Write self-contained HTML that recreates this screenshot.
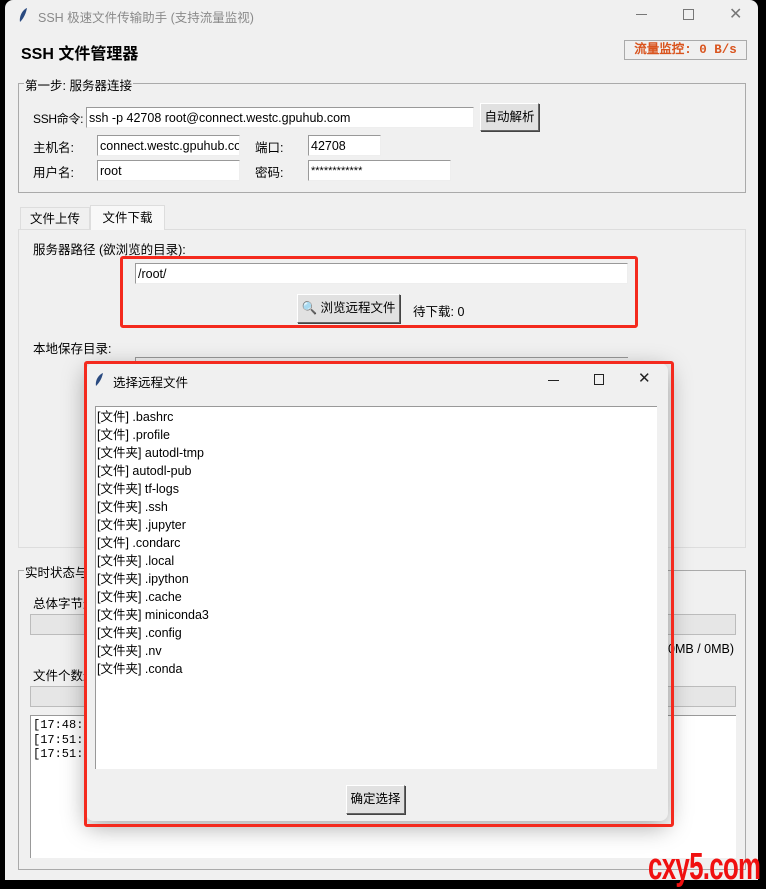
<!DOCTYPE html>
<html><head><meta charset="utf-8"><style>
*{margin:0;padding:0;box-sizing:border-box}
body{width:766px;height:889px;background:#000;position:relative;overflow:hidden;font-family:"Liberation Sans","Noto Sans CJK SC",sans-serif;font-size:12.5px;color:#000}
.a{position:absolute;white-space:nowrap}
.win{position:absolute;left:5px;top:0;width:753px;height:880px;background:#f0f0f0;border-radius:8px 8px 0 0}
.ent{position:absolute;background:#fff;border:1px solid #999;border-right-color:#eee;border-bottom-color:#eee;padding-left:2px;line-height:20px}
.btn{position:absolute;background:#e1e1e1;border:1px solid #fff;border-right-color:#666;border-bottom-color:#666;box-shadow:1px 1px 0 #444;text-align:center}
.grp{position:absolute;border:1px solid #aaa}
.lbl{position:absolute;background:#f0f0f0;padding:0 1px}
.bar{position:absolute;background:#e6e6e6;border:1px solid #bcbcbc}
.mono{font-family:"Liberation Mono","DejaVu Sans Mono",monospace}
</style></head><body>
<div class="win"></div>
<svg class="a" style="left:17px;top:7px" width="12" height="16" viewBox="0 0 12 16"><path d="M3 15 C2 10 5 3 10 1 C9 6 7 11 3 15Z" fill="#2a4a80"/></svg>
<div class="a" style="left:38px;top:7px;color:#8a8a8a;font-size:12.5px">SSH 极速文件传输助手 (支持流量监视)</div>
<div class="a" style="left:636px;top:14px;width:11px;height:1px;background:#777"></div>
<div class="a" style="left:683px;top:9px;width:11px;height:11px;border:1px solid #777"></div>
<div class="a" style="left:729px;top:4px;color:#777;font-size:16px">&#10005;</div>

<div class="a" style="left:21px;top:40px;font-weight:bold;font-size:16px">SSH 文件管理器</div>
<div class="a mono" style="left:624px;top:40px;width:123px;height:20px;border:1px solid #aaa;color:#d9541e;font-weight:bold;font-size:12.5px;line-height:18px;text-align:center">流量监控: 0 B/s</div>

<div class="grp" style="left:18px;top:83px;width:728px;height:110px"></div>
<div class="lbl" style="left:24px;top:75px">第一步: 服务器连接</div>
<div class="a" style="left:33px;top:110px;font-size:12px;letter-spacing:-0.3px">SSH命令:</div>
<div class="ent" style="left:86px;top:107px;width:388px;height:21px">ssh -p 42708 root@connect.westc.gpuhub.com</div>
<div class="btn" style="left:480px;top:103px;width:59px;height:28px;line-height:26px">自动解析</div>
<div class="a" style="left:33px;top:137px">主机名:</div>
<div class="ent" style="left:97px;top:135px;width:143px;height:21px;overflow:hidden">connect.westc.gpuhub.com</div>
<div class="a" style="left:255px;top:137px">端口:</div>
<div class="ent" style="left:308px;top:135px;width:73px;height:21px">42708</div>
<div class="a" style="left:33px;top:162px">用户名:</div>
<div class="ent" style="left:97px;top:160px;width:143px;height:21px">root</div>
<div class="a" style="left:255px;top:162px">密码:</div>
<div class="ent" style="left:308px;top:160px;width:143px;height:21px;font-size:11px">************</div>

<div class="a" style="left:18px;top:229px;width:728px;height:319px;border:1px solid #ddd;background:#f0f0f0"></div>
<div class="a" style="left:20px;top:207px;width:70px;height:23px;border:1px solid #ddd;border-bottom:none;text-align:center;line-height:22px">文件上传</div>
<div class="a" style="left:90px;top:205px;width:75px;height:25px;border:1px solid #ddd;border-bottom:none;background:#f8f8f8;text-align:center;line-height:24px">文件下载</div>
<div class="a" style="left:33px;top:239px">服务器路径 (欲浏览的目录):</div>
<div class="ent" style="left:135px;top:263px;width:493px;height:21px">/root/</div>
<div class="btn" style="left:297px;top:294px;width:103px;height:29px;line-height:27px">&#128269; 浏览远程文件</div>
<div class="a" style="left:413px;top:301px">待下载: 0</div>
<div class="a" style="left:120px;top:256px;width:518px;height:72px;border:3px solid #f42a1e;border-radius:3px"></div>
<div class="a" style="left:33px;top:338px">本地保存目录:</div>
<div class="a" style="left:135px;top:357px;width:493px;height:20px;border-top:1px solid #999;border-left:1px solid #999"></div>

<div class="grp" style="left:18px;top:570px;width:728px;height:300px"></div>
<div class="lbl" style="left:24px;top:562px">实时状态与监控</div>
<div class="a" style="left:33px;top:593px">总体字节进度:</div>
<div class="bar" style="left:30px;top:614px;width:706px;height:21px"></div>
<div class="a" style="left:600px;top:642px;width:134px;text-align:right">(0MB / 0MB)</div>
<div class="a" style="left:33px;top:665px">文件个数进度:</div>
<div class="bar" style="left:30px;top:686px;width:706px;height:21px"></div>
<div class="a mono" style="left:30px;top:715px;width:706px;height:143px;background:#fff;border-top:1px solid #999;border-left:1px solid #999;padding:2px 2px;font-size:12px;line-height:14.5px">[17:48:12] ...<br>[17:51:30] ...<br>[17:51:45] ...</div>

<!-- dialog -->
<div class="a" style="left:86px;top:363px;width:582px;height:458px;background:#f0f0f0;border-radius:8px;box-shadow:0 6px 24px rgba(0,0,0,.35)"></div>
<svg class="a" style="left:94px;top:372px" width="10" height="15" viewBox="0 0 10 15"><path d="M2 14 C1 9 4 3 9 1 C8 6 6 10 2 14Z" fill="#2a4a80"/></svg>
<div class="a" style="left:113px;top:372px">选择远程文件</div>
<div class="a" style="left:548px;top:380px;width:11px;height:1px;background:#222"></div>
<div class="a" style="left:594px;top:374px;width:10px;height:11px;border:1px solid #222"></div>
<div class="a" style="left:638px;top:369px;font-size:15px;color:#222">&#10005;</div>
<div class="a" style="left:95px;top:406px;width:562px;height:363px;background:#fff;border-top:1px solid #999;border-left:1px solid #999;padding:1px 1px;line-height:18px">
[文件] .bashrc<br>[文件] .profile<br>[文件夹] autodl-tmp<br>[文件] autodl-pub<br>[文件夹] tf-logs<br>[文件夹] .ssh<br>[文件夹] .jupyter<br>[文件] .condarc<br>[文件夹] .local<br>[文件夹] .ipython<br>[文件夹] .cache<br>[文件夹] miniconda3<br>[文件夹] .config<br>[文件夹] .nv<br>[文件夹] .conda</div>
<div class="btn" style="left:346px;top:785px;width:59px;height:29px;line-height:27px">确定选择</div>
<div class="a" style="left:84px;top:361px;width:590px;height:466px;border:3px solid #f42a1e;border-radius:3px"></div>

<div class="a" style="left:648px;top:846px;color:#f01010;font-weight:bold;font-size:38px;letter-spacing:-1px;transform:scaleX(.68);transform-origin:left;font-family:'Liberation Sans Narrow','Liberation Sans',sans-serif">cxy5.com</div>
</body></html>
